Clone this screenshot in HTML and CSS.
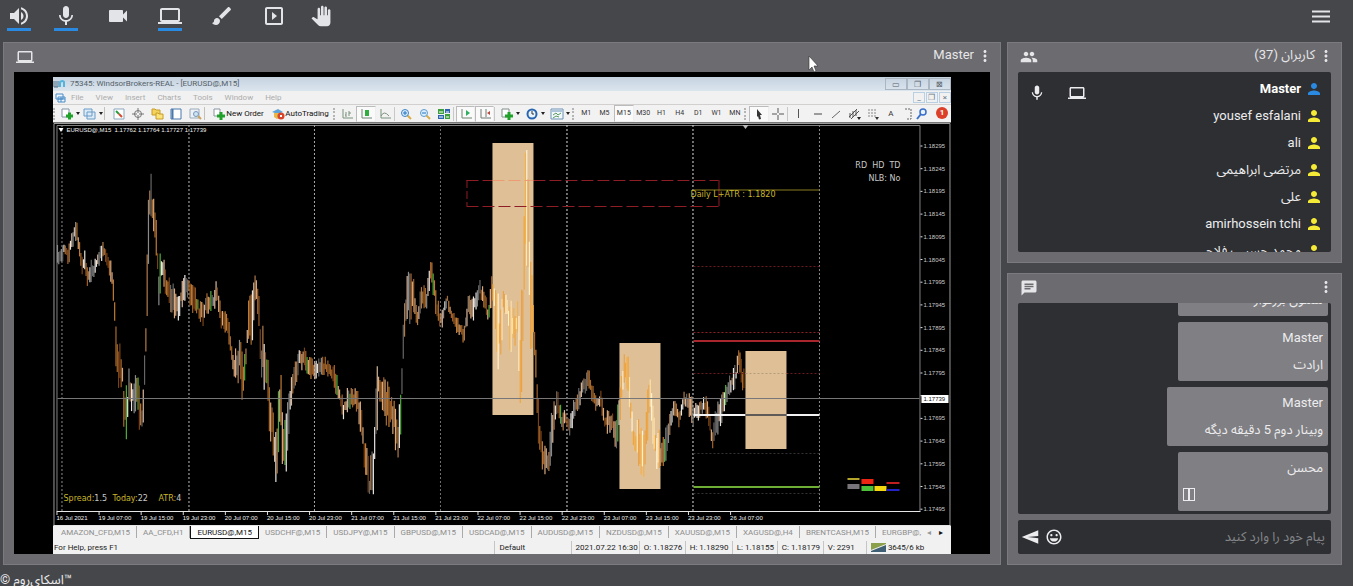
FILE: index.html
```html
<!DOCTYPE html>
<html lang="fa">
<head>
<meta charset="utf-8">
<title>Skyroom</title>
<link rel="stylesheet" href="styles.css">
</head>
<body>
<svg class="defs" aria-hidden="true">
  <symbol id="volume" viewBox="0 0 24 24"><path d="M3 9v6h4l5 5V4L7 9H3zm13.5 3c0-1.77-1.02-3.29-2.5-4.03v8.05c1.48-.73 2.5-2.25 2.5-4.02zM14 3.23v2.06c2.89.86 5 3.54 5 6.71s-2.11 5.85-5 6.71v2.06c4.01-.91 7-4.49 7-8.77s-2.99-7.86-7-8.77z"/></symbol>
  <symbol id="mic" viewBox="0 0 24 24"><path d="M12 14c1.66 0 2.99-1.34 2.99-3L15 5c0-1.66-1.34-3-3-3S9 3.34 9 5v6c0 1.66 1.34 3 3 3zm5.3-3c0 3-2.54 5.1-5.3 5.1S6.7 14 6.7 11H5c0 3.41 2.72 6.23 6 6.72V21h2v-3.28c3.28-.48 6-3.3 6-6.72h-1.7z"/></symbol>
  <symbol id="video" viewBox="0 0 24 24"><path d="M17 10.5V7c0-.55-.45-1-1-1H4c-.55 0-1 .45-1 1v10c0 .55.45 1 1 1h12c.55 0 1-.45 1-1v-3.5l4 4v-11l-4 4z"/></symbol>
  <symbol id="laptop" viewBox="0 0 24 24"><path d="M20 18c1.1 0 1.99-.9 1.99-2L22 6c0-1.1-.9-2-2-2H4c-1.1 0-2 .9-2 2v10c0 1.1.9 2 2 2H0v2h24v-2h-4zM4 6h16v10H4V6z"/></symbol>
  <symbol id="brush" viewBox="0 0 24 24"><path d="M7 14c-1.66 0-3 1.34-3 3 0 1.31-1.16 2-2 2 .92 1.22 2.49 2 4 2 2.21 0 4-1.79 4-4 0-1.66-1.34-3-3-3zm13.71-9.37l-1.34-1.34c-.39-.39-1.02-.39-1.41 0L9 12.25 11.75 15l8.96-8.96c.39-.39.39-1.02 0-1.41z"/></symbol>
  <symbol id="slideshow" viewBox="0 0 24 24"><path d="M10 8v8l5-4-5-4zm9-5H5c-1.1 0-2 .9-2 2v14c0 1.1.9 2 2 2h14c1.1 0 2-.9 2-2V5c0-1.1-.9-2-2-2zm0 16H5V5h14v14z"/></symbol>
  <symbol id="hand" viewBox="-2 -2 28 28"><path d="M23 5.5V20c0 2.2-1.8 4-4 4h-7.3c-1.08 0-2.1-.43-2.85-1.19L1 14.83s1.26-1.23 1.3-1.25c.22-.19.49-.29.79-.29.22 0 .42.06.6.16.04.01 4.31 2.46 4.31 2.46V4c0-.83.67-1.5 1.5-1.5S11 3.17 11 4v7h1V1.5c0-.83.67-1.5 1.5-1.5S15 .67 15 1.5V11h1V2.5c0-.83.67-1.5 1.5-1.5s1.5.67 1.5 1.5V11h1V5.5c0-.83.67-1.5 1.5-1.5s1.5.67 1.5 1.5z"/></symbol>
  <symbol id="people" viewBox="0 0 24 24"><path d="M16 11c1.66 0 2.99-1.34 2.99-3S17.66 5 16 5c-1.66 0-3 1.34-3 3s1.34 3 3 3zm-8 0c1.66 0 2.99-1.34 2.99-3S9.66 5 8 5C6.34 5 5 6.34 5 8s1.34 3 3 3zm0 2c-2.33 0-7 1.17-7 3.5V19h14v-2.5c0-2.33-4.67-3.5-7-3.5zm8 0c-.29 0-.62.02-.97.05 1.16.84 1.97 1.97 1.97 3.45V19h6v-2.5c0-2.33-4.67-3.5-7-3.5z"/></symbol>
  <symbol id="person" viewBox="0 0 24 24"><path d="M12 12c2.21 0 4-1.79 4-4s-1.79-4-4-4-4 1.79-4 4 1.79 4 4 4zm0 2c-2.67 0-8 1.34-8 4v2h16v-2c0-2.66-5.33-4-8-4z"/></symbol>
  <symbol id="chat" viewBox="0 0 24 24"><path d="M20 2H4c-1.1 0-1.99.9-1.99 2L2 22l4-4h14c1.1 0 2-.9 2-2V4c0-1.1-.9-2-2-2zM6 9h12v2H6V9zm8 5H6v-2h8v2zm4-6H6V6h12v2z"/></symbol>
  <symbol id="more" viewBox="0 0 24 24"><path d="M12 8c1.1 0 2-.9 2-2s-.9-2-2-2-2 .9-2 2 .9 2 2 2zm0 2c-1.1 0-2 .9-2 2s.9 2 2 2 2-.9 2-2-.9-2-2-2zm0 6c-1.1 0-2 .9-2 2s.9 2 2 2 2-.9 2-2-.9-2-2-2z"/></symbol>
  <symbol id="menu" viewBox="0 0 24 24"><path d="M3 18.500h18v-2H3v2zm0-5h18v-2H3v2zm0-7v2h18v-2H3z"/></symbol>
  <symbol id="send" viewBox="0 0 24 24"><path d="M23 21L1 12 23 3v7.500L9 12l14 1.500z"/></symbol>
  <symbol id="smile" viewBox="0 0 24 24"><path d="M11.990 2C6.470 2 2 6.480 2 12s4.470 10 9.990 10C17.520 22 22 17.520 22 12S17.520 2 11.990 2zM12 20c-4.420 0-8-3.580-8-8s3.580-8 8-8 8 3.580 8 8-3.580 8-8 8zm3.500-9c.83 0 1.500-.67 1.500-1.500S16.330 8 15.500 8 14 8.670 14 9.500s.67 1.500 1.500 1.500zm-7 0c.83 0 1.500-.67 1.500-1.500S9.330 8 8.500 8 7 8.670 7 9.500 7.670 11 8.500 11zm3.500 7c2.800 0 5-1.800 5.500-4.500h-11C7 16.200 9.200 18 12 18z"/></symbol>
</svg>

<header class="topbar">
  <div class="tools">
    <div class="tool-pair">
      <button class="tool on" aria-label="speaker"><svg><use href="#volume"/></svg></button>
      <button class="tool on" aria-label="microphone"><svg><use href="#mic"/></svg></button>
    </div>
    <button class="tool" aria-label="webcam"><svg><use href="#video"/></svg></button>
    <button class="tool on" aria-label="desktop"><svg><use href="#laptop"/></svg></button>
    <button class="tool" aria-label="whiteboard"><svg><use href="#brush"/></svg></button>
    <div class="tool-pair">
      <button class="tool" aria-label="player"><svg><use href="#slideshow"/></svg></button>
      <button class="tool" aria-label="raise hand"><svg><use href="#hand"/></svg></button>
    </div>
  </div>
  <button class="tool" aria-label="menu"><svg><use href="#menu"/></svg></button>
</header>

<main class="room">
  <section class="panel share">
    <div class="panel-head">
      <svg class="head-icon"><use href="#laptop"/></svg>
      <span class="panel-title">Master</span>
      <button class="more" aria-label="options"><svg><use href="#more"/></svg></button>
    </div>
    <div class="stage">
      <div class="mt">
        <div class="mt-title">
          <svg class="logo" viewBox="0 0 12 10"><path d="M1 2v6h4V2M3 2v6" fill="none" stroke="#4d6f86"/><path d="M7 8V3q3-2 4 0v5" fill="none" stroke="#53b4dd" stroke-width="2"/></svg>
          <span>75345: WindsorBrokers-REAL - [EURUSD@,M15]</span>
          <div class="win-btns"><i>▭</i><i>❐</i><i>⊠</i></div>
        </div>
        <div class="mt-menu">
          <svg class="logo" viewBox="0 0 12 10"><path d="M1 1h7v5H1zM3 4h7v5H3zM3 6h7M6 4v5" fill="#eef6ff" stroke="#4a8cc6"/></svg>
          <span>File</span><span>View</span><span>Insert</span><span>Charts</span><span>Tools</span><span>Window</span><span>Help</span>
          <div class="mdi-btns"><i>_</i><i>❐</i><i>×</i></div>
        </div>
        <div class="mt-tools">
          <i class="grip"></i>
          <div class="c drop"><svg viewBox="0 0 14 12"><path d="M2 1h7v8H2z" fill="#fff" stroke="#7e95a8"/><path d="M6 8h7M9.500 4.500v7" stroke="#20a12a" stroke-width="3"/></svg></div>
          <div class="c drop"><svg viewBox="0 0 14 12"><path d="M1 1h8v7H1zM4 4h8v7H4z" fill="#dcebf7" stroke="#6b9cc7"/></svg></div>
          <i class="sep"></i>
          <div class="group nav">
            <div class="c"><svg viewBox="0 0 14 12"><path d="M2 1h10v10H2z" fill="#fff" stroke="#8ba7bf"/><path d="M4 3l3 3" stroke="#2b9c3b" stroke-width="2"/><path d="M7 6l3 3" stroke="#d94a2b" stroke-width="2"/></svg></div>
            <div class="c"><svg viewBox="0 0 14 12"><circle cx="7" cy="6" r="3.500" fill="none" stroke="#777"/><path d="M7 0v5M7 7v5M1 6h5M8 6h5" stroke="#777"/></svg></div>
            <div class="c"><svg viewBox="0 0 14 12"><path d="M2 1h3l1 1h4v5H2z" fill="#f3d25e" stroke="#c79c28"/><path d="M6 5h2l1 1h4v5H6z" fill="#fbe27a" stroke="#c79c28"/></svg></div>
            <div class="c"><svg viewBox="0 0 14 12"><path d="M2 1h10v10H2z" fill="#fff" stroke="#4b79ad"/><path d="M3.500 1v10" stroke="#4b79ad" stroke-width="2"/></svg></div>
            <div class="c"><svg viewBox="0 0 14 12"><path d="M2 1h9v9H2z" fill="#eef2f5" stroke="#9ab"/><circle cx="8" cy="6" r="2.500" fill="#cfe3f2" stroke="#7199c0"/><path d="M10 8l3 3" stroke="#c9a25c" stroke-width="2"/></svg></div>
          </div>
          <i class="sep"></i>
          <div class="c order"><svg viewBox="0 0 14 12"><path d="M2 1h6v7H2z" fill="#fff" stroke="#8795a2"/><path d="M5 8h8M9 4v8" stroke="#20a12a" stroke-width="3"/></svg><b>New Order</b></div>
          <div class="c auto"><svg viewBox="0 0 14 12"><path d="M1 4l6-3 5 3-5 2z" fill="#5da4db"/><path d="M3 5h7v4l-4 2-3-2z" fill="#e8b84a"/><circle cx="10" cy="8" r="3.500" fill="#d9442c"/><path d="M9 7h2v2H9z" fill="#fff"/></svg><b>AutoTrading</b></div>
          <i class="grip"></i>
          <div class="group g3">
            <div class="c"><svg viewBox="0 0 14 12"><path d="M3 1v9h10M6 4v5M9 3v5M5 7h1M9 5h2" fill="none" stroke="#7b927d"/></svg></div>
            <div class="c on"><svg viewBox="0 0 14 12"><path d="M3 1v9h10" fill="none" stroke="#6f8671"/><path d="M6 2h4v6H6z" fill="#2fae3f"/></svg></div>
            <div class="c"><svg viewBox="0 0 14 12"><path d="M3 1v9h10M3 8q3-6 8 0" fill="none" stroke="#7b927d"/></svg></div>
          </div>
          <i class="line"></i>
          <div class="group g3">
            <div class="c"><svg viewBox="0 0 14 12"><path d="M8 7l4 4" stroke="#d9ae46" stroke-width="2"/><circle cx="6" cy="5" r="3.500" fill="#d9efff" stroke="#3e83c4"/><path d="M4 5h4M6 3v4" stroke="#2672b8"/></svg></div>
            <div class="c"><svg viewBox="0 0 14 12"><path d="M8 7l4 4" stroke="#d9ae46" stroke-width="2"/><circle cx="6" cy="5" r="3.500" fill="#d9efff" stroke="#5e9bd0"/><path d="M4 5h4" stroke="#2672b8"/></svg></div>
            <div class="c"><svg viewBox="0 0 14 12"><path d="M1 1h6v5H1zM8 6h5v5H8z" fill="#3d9e3d"/><path d="M8 1h5v4H8zM1 7h6v4H1z" fill="#2e64ae"/><path d="M2 4h4M9 4h3M2 9h4M9 9h3" stroke="#fff"/></svg></div>
          </div>
          <i class="line"></i>
          <div class="group g2">
            <div class="c on"><svg viewBox="0 0 14 12"><path d="M3 1v9h10" fill="none" stroke="#6f8671"/><path d="M7 2l4 3-4 3z" fill="#2fae5f"/></svg></div>
            <div class="c on"><svg viewBox="0 0 14 12"><path d="M3 1v9h10M8 1v8" fill="none" stroke="#6f7a71"/><path d="M9 5l3-2v4z" fill="#b94a3c"/></svg></div>
          </div>
          <i class="line"></i>
          <div class="group gd">
            <div class="c drop"><svg viewBox="0 0 14 12"><path d="M2 1h7v8H2z" fill="#fff" stroke="#7e8f88"/><path d="M5 8h8M9 4v8" stroke="#20a12a" stroke-width="3"/></svg></div>
            <div class="c drop"><svg viewBox="0 0 14 12"><circle cx="7" cy="6" r="4.500" fill="#eaf4fd" stroke="#2966b1" stroke-width="2"/><path d="M7 3v3h2" fill="none" stroke="#333"/></svg></div>
            <div class="c drop"><svg viewBox="0 0 14 12"><path d="M1 1h12v10H1z" fill="#f2f8fc" stroke="#6d92b5"/><path d="M2 3h10" stroke="#6d92b5"/><path d="M3 7l3-2 2 2 3-2M3 10l3-2 3 1" fill="none" stroke="#5a9c5f"/></svg></div>
          </div>
          <i class="grip"></i>
          <div class="group tf"><span>M1</span><span>M5</span><span class="on">M15</span><span>M30</span><span>H1</span><span>H4</span><span>D1</span><span>W1</span><span>MN</span></div>
          <i class="grip"></i>
          <div class="group g2">
            <div class="c on"><svg viewBox="0 0 14 12"><path d="M5 1l5 6H8l1 4-2 .5L6 8 5 9z" fill="#333"/></svg></div>
            <div class="c"><svg viewBox="0 0 14 12"><path d="M7 0v5M7 7v5M1 6h5M8 6h5" stroke="#555"/></svg></div>
          </div>
          <i class="line"></i>
          <div class="group draw">
            <div class="c"><svg viewBox="0 0 14 12"><path d="M6.500 1v9" stroke="#555"/></svg></div>
            <div class="c"><svg viewBox="0 0 14 12"><path d="M3 6h8" stroke="#444"/></svg></div>
            <div class="c"><svg viewBox="0 0 14 12"><path d="M3 10l8-7" stroke="#666"/></svg></div>
            <div class="c"><svg viewBox="0 0 14 12"><path d="M2 9l8-8M4 11l8-8M3 5v5M6 3v6M9 2v6" stroke="#555"/><path d="M10 9h4l-2 3z" fill="#222"/></svg></div>
            <div class="c"><svg viewBox="0 0 14 12"><path d="M2 2h9M2 5h9M2 8h9" stroke="#888" stroke-dasharray="2 1"/><path d="M9 9h4l-2 3z" fill="#333"/></svg></div>
            <span>A</span>
          </div>
          <div class="group last">
            <div class="c"><svg viewBox="0 0 14 12"><path d="M4 1h6v10H5" fill="none" stroke="#666" stroke-dasharray="2 1"/></svg></div>
            <div class="c"><svg viewBox="0 0 14 12"><circle cx="8" cy="4" r="3" fill="#eaf2ff" stroke="#386fc9" stroke-width="1.500"/><path d="M6 6l-4 5" stroke="#386fc9" stroke-width="2"/></svg></div>
            <div class="alert">1</div>
          </div>
        </div>
        <svg class="chart" id="chart" viewBox="53 123 897 403" role="img" aria-label="EURUSD chart">
          <rect x="53" y="123" width="897" height="403" fill="#000"/>
          <path d="M53.500 526V123.500H949.500V526" fill="none" stroke="#9a9a9a"/>
          <path d="M56.500 511.500V125.500H919.500V511.500" fill="none" stroke="#808080"/>
          <path d="M56 511.500H920M53 525.500H950" stroke="#e6e6e6"/>
          <g stroke="#8d8d8d" stroke-dasharray="2 2"><path d="M61.500 125V511"/><path d="M188.500 125V511" stroke="#bbb"/><path d="M314 125V511" stroke="#aaa"/><path d="M440 125V511" stroke="#707070"/><path d="M566.500 125V511" stroke="#ddd"/><path d="M692.500 125V511" stroke="#ddd"/><path d="M819 125V511" stroke="#888"/></g>
          <g id="bars"></g>
          <g fill="#dfc096"><rect x="492" y="143" width="41" height="272"/><rect x="619" y="343" width="41" height="146"/><rect x="745" y="351" width="41" height="98"/></g>
          <g id="zonebars"></g>
          <g stroke="#8e1d25" fill="none"><path d="M466 180.500H492M533 180.500H718M466 206.500H718" stroke-dasharray="12 4"/><path d="M492 180.500H533" stroke="#ee9a72" stroke-dasharray="12 4"/><path d="M466.500 180V206" stroke-dasharray="8 3"/><path d="M718.500 180V206"/></g>
          <path d="M57 398.500H919" stroke="#777"/>
          <path d="M693 190H819" stroke="#8a7d1e"/>
          <g stroke="#6b1a1e" stroke-dasharray="2 2"><path d="M693 266.500H819"/><path d="M693 332.500H819" stroke="#8e2024"/><path d="M693 373.500H745M786 373.500H819"/><path d="M745 373.500H786" stroke="#b59b78"/></g>
          <path d="M693 341H819" stroke="#a8262c" stroke-width="2"/>
          <path d="M693 415H745M786 415H819" stroke="#f2f2f2" stroke-width="2"/><path d="M745 415H786" stroke="#5f5a58" stroke-width="2"/>
          <path d="M693 453.500H819M693 493.500H819" stroke="#333" stroke-dasharray="2 2"/>
          <path d="M693 487H819" stroke="#6fae35" stroke-width="2"/>
          <path d="M58 128h5l-2.500 4z" fill="#fff"/><path d="M742 125h6l-3 4z" fill="#bbb"/>
          <g><path d="M847 478h12v2h-12z" fill="#b5a52a"/><path d="M847 484h12v5h-12z" fill="#77757a"/><path d="M861 479h12v5h-12z" fill="#ee2512"/><path d="M861 486h12v5h-12z" fill="#4dc03a"/><path d="M874 486h12v5h-12z" fill="#f4d80f"/><path d="M886 482h13v2h-13z" fill="#c01f1f"/><path d="M886 489h13v2h-13z" fill="#2423c9"/></g>
          <text class="t6 wh" x="66" y="132">EURUSD@,M15&#160; 1.17762 1.17764 1.17727 1.17739</text>
          <text class="t8" x="690" y="197">Daily L+ATR : 1.1820</text>
          <text class="t8 gr end" x="900" y="168" xml:space="preserve">RD  HD  TD</text>
          <text class="t8 gr end" x="900" y="181">NLB: No</text>
          <text class="t8" x="63" y="501">Spread:<tspan class="gr">1.5</tspan></text>
          <text class="t8" x="112" y="501">Today:<tspan class="gr">22</tspan></text>
          <text class="t8" x="158" y="501">ATR:<tspan class="gr">4</tspan></text>
          <g id="axes"></g>
          <rect x="921" y="395" width="27" height="8" fill="#fff"/><text class="t6" x="923" y="401" fill="#111">1.17739</text>
        </svg>
        <div class="mt-tabs">
          <span>AMAZON_CFD,M15</span><span>AA_CFD,H1</span><span class="cur">EURUSD@,M15</span><span>USDCHF@,M15</span><span>USDJPY@,M15</span><span>GBPUSD@,M15</span><span>USDCAD@,M15</span><span>AUDUSD@,M15</span><span>NZDUSD@,M15</span><span>XAUUSD@,M15</span><span>XAGUSD@,H4</span><span>BRENTCASH,M15</span><span class="cut">EURGBP@,</span><i class="dim">◂</i><i>▸</i>
        </div>
        <div class="mt-status">
          <span>For Help, press F1</span><span>Default</span><span>2021.07.22 16:30</span><span>O: 1.18276</span><span>H: 1.18290</span><span>L: 1.18155</span><span>C: 1.18179</span><span>V: 2291</span>
          <span class="net"><svg viewBox="0 0 15 9"><path d="M0 0h15v1L0 7z" fill="#8ba04b"/><path d="M0 9V8l15-6v7z" fill="#3f5f74"/></svg>3645/6 kb</span>
        </div>
      </div>
    </div>
    <svg class="pointer" viewBox="0 0 10 18"><path d="M1 1v14l3-3 2 5 2-1-2-5h4z" fill="#fff" stroke="#333" stroke-width=".6"/></svg>
  </section>

  <div class="side">
    <section class="panel users" dir="rtl">
      <div class="panel-head">
        <button class="more" aria-label="options"><svg><use href="#more"/></svg></button>
        <span class="panel-title">کاربران (37)</span>
        <svg class="head-icon"><use href="#people"/></svg>
      </div>
      <ul class="well user-list">
        <li class="me"><svg><use href="#person"/></svg><b>Master</b><div class="state"><svg><use href="#laptop"/></svg><svg><use href="#mic"/></svg></div></li>
        <li><svg><use href="#person"/></svg>yousef esfalani</li>
        <li><svg><use href="#person"/></svg>ali</li>
        <li><svg><use href="#person"/></svg>مرتضی ابراهیمی</li>
        <li><svg><use href="#person"/></svg>علی</li>
        <li><svg><use href="#person"/></svg>amirhossein tchi</li>
        <li><svg><use href="#person"/></svg>محمد حسیب فلاحی</li>
      </ul>
    </section>
    <section class="panel chat" dir="rtl">
      <div class="panel-head">
        <button class="more" aria-label="options"><svg><use href="#more"/></svg></button>
        <svg class="head-icon"><use href="#chat"/></svg>
      </div>
      <div class="well messages">
        <article><p>محسن</p><p>ممنون بزرگوار</p></article>
        <article><p>Master</p><p>ارادت</p></article>
        <article><p>Master</p><p>وبینار دوم 5 دقیقه دیگه</p></article>
        <article><p>محسن</p><p class="boxes"><i></i><i></i></p></article>
      </div>
      <div class="compose">
        <input type="text" aria-label="پیام" placeholder="پیام خود را وارد کنید">
        <button aria-label="emoji"><svg><use href="#smile"/></svg></button>
        <button aria-label="send"><svg><use href="#send"/></svg></button>
      </div>
    </section>
  </div>
</main>
<footer class="foot" dir="rtl"><a href="#">™اسکای‌روم</a> ©</footer>
<script src="chart.js"></script>
</body>
</html>
```
FILE: styles.css
```css
* { box-sizing: border-box; }
html, body { height: 100%; }
body {
  margin: 0;
  display: flex;
  flex-direction: column;
  overflow: hidden;
  background: #45474a;
  color: #ececee;
  font: 13px/20px Roboto, "Noto Sans Arabic", "DejaVu Sans", sans-serif;
}
button { padding: 0; border: 0; background: none; color: inherit; display: flex; align-items: center; justify-content: center; }
svg { display: block; fill: currentColor; }
i { font-style: normal; }
.defs { display: none; }

.topbar { flex: none; height: 42px; padding: 4px 20px 0 7px; display: flex; justify-content: space-between; align-items: flex-start; }
.tools { display: flex; gap: 28px; }
.tool-pair { display: flex; gap: 23px; }
.tool { width: 24px; height: 27px; align-items: flex-start; border-bottom: 3px solid transparent; color: #e3e4e8; }
.tool svg { width: 24px; height: 24px; }
.tool.on { border-color: #2a8ae2; }

.room { flex: 1; min-height: 0; display: flex; gap: 6px; padding: 0 11px 0 3px; }
.panel { display: flex; flex-direction: column; background: #6c6b6f; border: 1px solid #7b7b7f; padding: 0 10px 10px; }
.share { position: relative; flex: 1; min-width: 0; }
.side { width: 335px; flex: none; display: flex; flex-direction: column; gap: 10px; }
.users { flex: 0 0 42.3%; min-height: 0; }
.chat { flex: 1; min-height: 0; }
.panel-head { flex: none; height: 29px; display: flex; align-items: center; padding-bottom: 6px; color: #e6e6e9; }
.share .panel-head .panel-title { margin-left: auto; }
[dir="rtl"] .panel-head .head-icon { margin-right: auto; }
.panel-title { padding: 0 6px; }
.head-icon { width: 18px; height: 18px; margin: 4px 2px 0; }
.more { width: 20px; height: 20px; margin: 2px -5px 0; }
.more svg { width: 18px; height: 18px; }

.well { flex: 1; min-height: 0; overflow: hidden; margin: 0; background: #2d2f32; border-radius: 2px; }
.user-list { list-style: none; padding: 3px 8px; }
.user-list li { display: flex; align-items: center; gap: 4px; height: 27px; }
.user-list li > svg { width: 18px; height: 18px; color: #f5ea35; }
.user-list .me > svg { color: #2a8ae2; }
.me b { color: #fff; }
.state { margin-right: auto; margin-left: 2px; padding-top: 8px; display: flex; gap: 22px; }
.state svg { width: 18px; height: 18px; }

.messages { display: flex; flex-direction: column; justify-content: flex-end; gap: 6px; padding: 0 3px 3px; }
.messages article { flex: none; align-self: flex-start; min-width: 150px; max-width: 92%; padding: 2px 5px 3px 38px; background: #807f83; border-radius: 2px; }
.messages p { margin: 0; line-height: 27px; min-height: 27px; }
.messages .boxes { display: flex; justify-content: flex-end; align-items: center; margin-left: -33px; }
.boxes i { width: 6px; height: 13px; border: 1px solid #ececee; }
.compose { flex: none; height: 34px; margin-top: 6px; padding: 0 3px; display: flex; align-items: center; gap: 6px; background: #2d2f32; border-radius: 2px; }
.compose input { flex: 1; min-width: 0; padding: 0 3px; border: 0; outline: 0; background: none; color: #eee; font: inherit; }
.compose input::placeholder { color: #85868a; opacity: 1; }
.compose svg { width: 18px; height: 18px; }

.foot { flex: none; align-self: flex-start; height: 21px; padding-top: 5px; overflow: hidden; white-space: nowrap; line-height: 20px; }
.foot a { color: inherit; text-decoration: none; }

.stage { flex: 1; min-height: 0; padding: 5px 4% 0; background: #000; }
.mt { height: 100%; display: flex; flex-direction: column; overflow: hidden; background: #f1f1f1; color: #333; font: 8px/14px Roboto, sans-serif; white-space: nowrap; }
.mt-title { flex: none; height: 14px; display: flex; align-items: center; gap: 5px; background: linear-gradient(#c5d2df, #dbe5ee); color: #555f69; }
.logo { width: 12px; height: 10px; }
.win-btns, .mdi-btns { margin-left: auto; display: flex; }
.win-btns i { width: 22px; height: 12px; line-height: 12px; text-align: center; border: 1px solid #aab6c2; color: #56606a; }
.mdi-btns i { width: 12px; height: 11px; line-height: 10px; margin-left: 1px; text-align: center; border: 1px solid #b9cfe3; color: #67798a; }
.mt-menu { flex: none; height: 13px; padding-left: 2px; display: flex; align-items: center; gap: 12px; color: #acacac; }
.mt-menu .logo { margin-right: -8px; }
.mt-tools { flex: none; height: 19px; display: flex; align-items: center; border-top: 1px solid #d2cfcf; border-bottom: 1px solid #777; background: #f3f2f2; }
.grip { flex: none; width: 5px; height: 12px; border-left: 2px dotted #b5b5b5; }
.sep { flex: none; width: 5px; height: 13px; border-left: 1px solid #c2c0b8; }
.line { flex: none; width: 3px; height: 14px; border-left: 1px solid #c8c8c8; }
.group { display: flex; align-items: center; }
.group > * { flex: 1; text-align: center; line-height: 15px; }
.c { display: flex; justify-content: center; align-items: center; height: 16px; }
.c svg { width: 14px; height: 12px; }
.drop { width: 23px; }
.drop::after { content: ""; margin-left: 2px; border: 2px solid transparent; border-top: 3px solid #222; border-bottom: 0; }
.mt-tools .on { background: #fafafa; border: 1px solid #bbb; border-right-color: #eee; border-bottom-color: #eee; }
.nav { width: 95px; }
.order { width: 58px; }
.auto { width: 66px; }
.order b, .auto b { font-weight: 400; color: #111; }
.g3 { width: 56px; }
.g2 { width: 38px; }
.gd { width: 75px; }
.tf { width: 167px; font-size: 7px; }
.draw { width: 110px; }
.last { flex: 1; }
.last .alert { flex: none; width: 12px; height: 12px; margin: 0 3px 2px 6px; border-radius: 50%; background: #dc4028; color: #fff; font-weight: 700; line-height: 12px; }
.chart { flex: 1; min-height: 0; width: 100%; background: #000; }
.t6 { font: 6px "Liberation Sans", sans-serif; }
.t8 { font: 8px "DejaVu Sans", sans-serif; fill: #c9b62b; }
.wh { fill: #f2f2f2; }
.gr { fill: #c9c9c9; }
.end { text-anchor: end; }
.mt-tabs { flex: none; height: 15px; padding-left: 2px; display: flex; color: #8d8d8d; overflow: hidden; }
.mt-tabs span { flex: 1 1 auto; text-align: center; line-height: 14px; height: 12px; border-right: 1px solid #aaa; }
.mt-tabs .cur { background: #fff; color: #111; border: 1px solid #111; border-top: 0; height: 13px; }
.mt-tabs .cut { border: 0; }
.mt-tabs i { flex: none; width: 12px; color: #111; line-height: 14px; }
.mt-tabs .dim { color: #999; }
.mt-status { flex: none; height: 13px; display: grid; grid-template-columns: 441fr 76fr 68fr 46fr 47fr 45fr 46fr 43fr 85fr; line-height: 13px; color: #222; }
.mt-status span { min-width: 0; padding-left: 4px; border-left: 1px solid #c5c5c5; }
.mt-status span:first-child { padding-left: 1px; border: 0; }
.mt-status .net { display: flex; align-items: center; gap: 2px; }
.net svg { width: 15px; height: 9px; }
.pointer { position: absolute; left: 804px; top: 12px; width: 10px; height: 18px; }
```
FILE: chart.js
```javascript
// [x, high, low] envelope of the price series
const pts = [[57,248,270],[60,247,262],[64,238,256],[68,245,266],[72,228,245],[76,219,240],[78,232,252],[82,255,277],[85,252,268],[87,265,292],[90,262,280],[94,262,275],[98,255,266],[101,245,258],[104,243,260],[107,248,268],[110,260,280],[113,275,300],[114.5,290,350],[116,335,375],[119,340,390],[122,356,395],[124,380,440],[127,390,438],[129,360,400],[131,380,415],[134,378,412],[137,370,405],[139,380,430],[141,395,446],[143,385,425],[144.500,330,390],[146,300,360],[147,215,320],[148.500,180,235],[151,171,215],[152,182,236],[155,203,240],[157,235,280],[158,265,308],[160,255,290],[163,250,280],[166,268,300],[170,285,312],[173,272,315],[177,290,324],[180,285,310],[184,278,298],[188,272,300],[192,280,312],[195,290,308],[199,305,318],[203,300,328],[206,286,315],[210,294,310],[214,290,312],[216,275,300],[218,290,315],[221,310,328],[225,313,330],[229,325,345],[232,350,375],[236,350,380],[240,320,390],[243,350,405],[246,335,365],[248,300,340],[251,295,350],[253,275,340],[255,270,300],[258,290,330],[261,340,380],[264,315,390],[267,350,400],[269,385,440],[272,400,445],[274,430,482],[277,400,482],[280,370,430],[283,400,480],[285,420,482],[288,395,440],[291,370,410],[295,360,400],[299,345,365],[304,350,370],[308,360,375],[314,358,380],[317,362,375],[322,358,372],[330,360,378],[335,370,395],[340,390,405],[343,402,418],[348,387,412],[352,392,406],[357,390,412],[360,395,430],[363,430,460],[366,440,480],[369,470,502],[373,430,492],[376,365,450],[378,370,400],[382,375,410],[386,380,425],[390,395,430],[394,400,440],[397,420,464],[400,400,452],[401,340,450],[403,310,360],[406,280,330],[410,262,320],[413,280,315],[417,305,325],[422,280,310],[426,290,308],[430,258,285],[433,270,300],[437,300,320],[441,312,330],[444,300,318],[447,293,305],[451,308,322],[456,315,330],[460,325,335],[463,330,342],[466,305,330],[468,290,310],[472,300,325],[476,290,305],[480,282,298],[484,295,310],[488,305,325],[491,277,310],[494,278,310],[497,290,372],[500,292,378],[503,285,305],[506,285,320],[509,300,350],[513,305,348],[517,300,345],[519,300,410],[521,290,412],[523,280,340],[524.500,145,300],[526.500,145,260],[528,180,290],[530,250,358],[533,300,340],[535,345,375],[537,370,440],[539,425,450],[542,440,470],[546,450,477],[549,440,475],[551,410,455],[554,400,425],[557,390,410],[561,412,432],[565,410,425],[568,412,440],[572,400,430],[575,400,415],[580,385,405],[584,375,395],[588,369,385],[592,385,405],[596,395,412],[600,390,410],[604,412,430],[608,412,432],[612,408,430],[615,425,452],[618,400,435],[620,380,420],[623,345,400],[626,344,390],[630,380,430],[633,420,460],[638,420,470],[642,430,488],[645,420,460],[648,380,440],[650,365,410],[652,385,440],[656,440,470],[660,430,480],[663,440,472],[667,420,450],[671,403,425],[675,402,420],[679,412,425],[683,392,412],[687,393,410],[692,400,427],[696,405,420],[700,400,415],[704,398,412],[708,400,425],[710,420,440],[713,425,452],[716,405,440],[720,400,425],[724,390,410],[728,380,400],[732,370,390],[736,365,385],[738,349,370],[741,360,385],[744,370,400]];
const NS = "http://www.w3.org/2000/svg";
const byId = id => document.getElementById(id);
let seed = 7;
const rnd = () => (seed = (seed * 16807) % 2147483647) / 2147483647;
const add = (parent, tag, attrs, text) => {
  const el = document.createElementNS(NS, tag);
  for (const k in attrs) el.setAttribute(k, attrs[k]);
  if (text) el.textContent = text;
  parent.appendChild(el);
};
const down = ["#a3622a", "#7a4216", "#c07a34", "#a86a2c", "#d9a87c"];
const up = ["#e8e4e0", "#8a8a8a", "#d9b79c", "#666", "#b07a48"];
const zone = ["#f0a53c", "#fff0cf", "#f3b04e", "#e9a24a", "#fbe0a8"];
let k = 0;
for (let x = 57; x < 744; x += 1.3) {
  while (k < pts.length - 2 && pts[k + 1][0] <= x) k++;
  const [x0, h0, l0] = pts[k], [x1, h1, l1] = pts[k + 1];
  const t = (x - x0) / (x1 - x0);
  const hi = h0 + (h1 - h0) * t, lo = l0 + (l1 - l0) * t, span = lo - hi + 6;
  const a = hi - 3 + span * rnd() * 0.4, b = lo + 3 - span * rnd() * 0.4;
  const inZone = (x > 492 && x < 533) || (x > 619 && x < 660);
  const set = inZone ? zone : (h1 + l1 > h0 + l0 ? down : up);
  let color = set[Math.floor(rnd() * 5)];
  if (!inZone && rnd() < 0.025) color = "#4fae3a";
  const top = inZone ? Math.max(a, x < 533 ? 143 : 343) : a;
  add(byId(inZone ? "zonebars" : "bars"), "path", { d: `M${x.toFixed(1)} ${top.toFixed(1)}V${b.toFixed(1)}`, stroke: color, "stroke-width": 1.2 });
}
const axes = byId("axes");
for (let i = 0; i < 17; i++) {
  const y = 146 + i * 22.7;
  add(axes, "path", { d: `M920 ${y}h2`, stroke: "#ddd" });
  if (i !== 11) add(axes, "text", { class: "t6 gr", x: 923, y: y + 2 }, (1.18295 - i * 0.0005).toFixed(5));
}
const times = ["16 Jul 2021", "19 Jul 07:00", "19 Jul 15:00", "19 Jul 23:00", "20 Jul 07:00", "20 Jul 15:00", "20 Jul 23:00", "21 Jul 07:00", "21 Jul 15:00", "21 Jul 23:00", "22 Jul 07:00", "22 Jul 15:00", "22 Jul 23:00", "23 Jul 07:00", "23 Jul 15:00", "23 Jul 23:00", "26 Jul 07:00"];
times.forEach((label, i) => {
  const x = 56 + i * 42.1;
  add(axes, "path", { d: `M${x + 0.5} 512v3`, stroke: "#ddd" });
  add(axes, "text", { class: "t6 wh", x, y: 520 }, label);
});
```
